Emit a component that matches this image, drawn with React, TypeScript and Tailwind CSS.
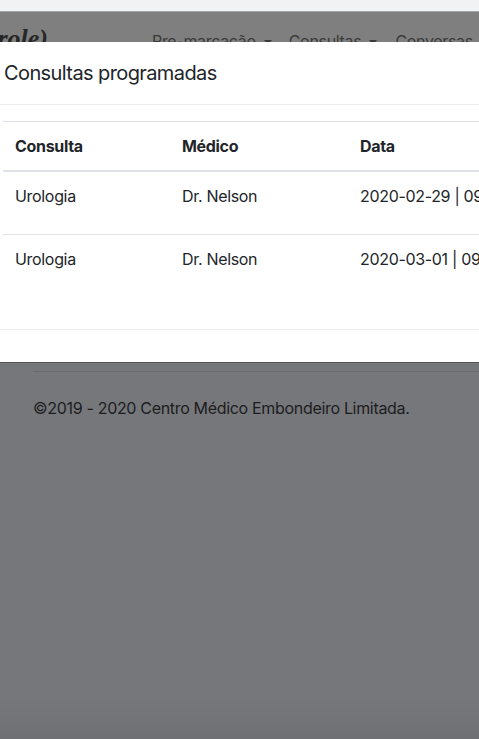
import React from "react"

const rows = [
  { consulta: "Urologia", medico: "Dr. Nelson", data: "2020-02-29 | 09:00" },
  { consulta: "Urologia", medico: "Dr. Nelson", data: "2020-03-01 | 09:00" },
]

function Caret() {
  return <span className="ml-[8px] inline-block align-middle border-x-[4px] border-t-[5px] border-x-transparent border-t-[#3b3b3b]" />
}

export default function App() {
  return (
    <div className="h-[739px] w-[479px] overflow-hidden bg-[#76777a] font-['Inter',sans-serif] tracking-[-0.02em] flex flex-col">
      {/* browser strip */}
      <div className="h-[11px] bg-[#f1f2f4] shrink-0" />
      <div className="h-px bg-[#a6a6a6] shrink-0" />

      {/* navbar, dimmed and partly hidden by the modal */}
      <div className="h-[30px] bg-[#7f7f7f] shrink-0 overflow-hidden flex">
        <div className="w-[48px] shrink-0 flex justify-end">
          <span className="mt-[12px] font-['Liberation_Serif',serif] italic font-bold text-[26px] leading-[30px] tracking-normal text-[#262626] whitespace-nowrap">
            (Controle)
          </span>
        </div>
        <div className="ml-[104px] mt-[17px] flex items-start text-[16px] leading-6 text-[#3b3b3b] whitespace-nowrap">
          <span>Pre-marcação<Caret /></span>
          <span className="ml-[17px]">Consultas<Caret /></span>
          <span className="ml-[18px]">Conversas</span>
        </div>
      </div>

      {/* modal */}
      <div className="bg-white shrink-0 border-b border-[#565656]">
        <div className="h-[63px] border-b border-[#e9ecef] pl-[4px] pt-4">
          <h5 className="text-[20px] leading-[30px] tracking-[-0.03em] text-[#212529] font-normal whitespace-nowrap">Consultas programadas</h5>
        </div>
        <div className="pt-4 pb-4 pl-[3px] overflow-hidden">
          <table className="w-[600px] border-collapse text-[16px] leading-6 text-[#212529] mb-4">
            <thead>
              <tr className="border-t border-[#dee2e6] border-b-2">
                <th className="w-[167px] p-3 text-left font-bold">Consulta</th>
                <th className="w-[178px] p-3 text-left font-bold">Médico</th>
                <th className="p-3 text-left font-bold">Data</th>
              </tr>
            </thead>
            <tbody>
              {rows.map((r, i) => (
                <tr key={i} className={i === 0 ? "border-b border-[#dee2e6]" : ""}>
                  <td className="h-[63px] p-3 align-top">{r.consulta}</td>
                  <td className="p-3 align-top">{r.medico}</td>
                  <td className="p-3 align-top whitespace-nowrap">{r.data}</td>
                </tr>
              ))}
            </tbody>
          </table>
        </div>
        <div className="h-[33px] border-t border-[#e9ecef]" />
      </div>

      {/* page footer behind the backdrop */}
      <div className="ml-[33px] mt-[8px] border-t border-[#6a6b6e]" />
      <p className="ml-[33px] mt-[24px] text-[16px] leading-6 text-[#1c1d1f] whitespace-nowrap">
        ©2019 - 2020 Centro Médico Embondeiro Limitada.
      </p>
      <div className="flex-1 flex flex-col justify-end">
        <div className="h-[40px] bg-gradient-to-b from-[#76777a] to-[#6f7073]" />
      </div>
    </div>
  )
}
